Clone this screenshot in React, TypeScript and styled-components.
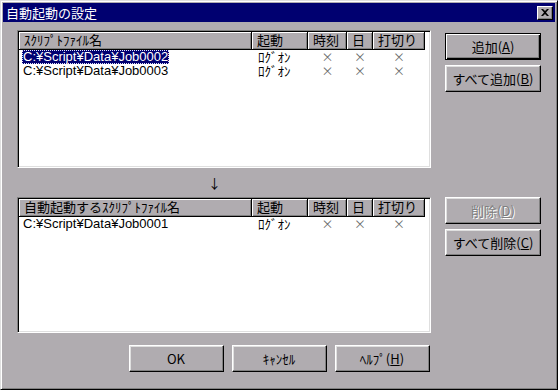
import React from "react";
import styled, { createGlobalStyle, css } from "styled-components";

const GRAY = "#b0acb0";
const NAVY = "#000070";
const FONT = `"Liberation Sans", "Noto Sans CJK JP", sans-serif`;
const JP = `"Noto Sans CJK JP", sans-serif`;

const GlobalStyle = createGlobalStyle`
  html, body { margin: 0; padding: 0; background: ${GRAY}; }
  body { font-family: ${FONT}; font-size: 13px; color: #000; }
  * { box-sizing: border-box; }
`;

const Dialog = styled.div`
  width: 558px;
  height: 390px;
  background: ${GRAY};
  border: 1px solid;
  border-color: #dfdfdf #000 #000 #dfdfdf;
  box-shadow: inset 1px 1px #fff, inset -1px -1px #808080;
  padding: 2px;
  display: flex;
  flex-direction: column;
`;

const TitleBar = styled.div`
  height: 19px;
  background: ${NAVY};
  display: flex;
  align-items: center;
  justify-content: space-between;
  padding: 0 2px 0 3px;
`;

const TitleText = styled.span`
  color: #fff;
  font-family: ${JP};
  font-size: 13px;
  line-height: 19px;
`;

const CloseButton = styled.div`
  width: 16px;
  height: 14px;
  background: ${GRAY};
  border: 1px solid;
  border-color: #fff #000 #000 #fff;
  box-shadow: inset -1px -1px #808080;
  display: flex;
  align-items: center;
  justify-content: center;
`;

const Body = styled.div`
  padding: 8px 11px 0 14px;
  display: flex;
  flex-direction: column;
`;

const Main = styled.div`
  display: grid;
  grid-template-columns: 414px 96px;
  grid-template-rows: 138px 29px 136px;
  column-gap: 14px;
`;

const ListBox = styled.div`
  background: #fff;
  border: 1px solid;
  border-color: #808080 #fff #fff #808080;
  box-shadow: inset 1px 1px #000, inset -1px -1px #dfdfdf;
  padding: 1px;
`;

const COLS = "233px 56px 39px 26px 52px";

const HeaderRow = styled.div`
  display: grid;
  grid-template-columns: ${COLS};
  height: 18px;
`;

const HeaderCell = styled.div`
  height: 18px;
  background: ${GRAY};
  border-right: 1px solid #000;
  border-bottom: 1px solid #000;
  box-shadow: inset 1px 1px #fff, inset -1px -1px #808080;
  padding-left: 5px;
  font-family: ${JP};
  font-size: 13px;
  line-height: 16px;
  white-space: nowrap;
`;

const Row = styled.div`
  display: grid;
  grid-template-columns: ${COLS};
  height: 14px;
  white-space: nowrap;
`;

const Cell = styled.div<{ $mark?: boolean; $pad?: number }>`
  height: 14px;
  line-height: 14px;
  font-family: ${FONT};
  font-size: 13px;
  padding-left: ${(p) => p.$pad ?? 3}px;
  ${(p) =>
    p.$mark &&
    css`
      text-align: center;
      padding-left: 0;
      color: #6c6c6c;
      font-family: ${JP};
      font-size: 12px;
    `}
`;

const NameLabel = styled.span<{ $selected?: boolean }>`
  display: inline-block;
  height: 14px;
  padding: 0 1px;
  ${(p) =>
    p.$selected &&
    css`
      background: ${NAVY};
      color: #fff;
      outline: 1px dotted #e0e0ff;
      outline-offset: -1px;
    `}
`;

const Kana = styled.span`
  font-family: ${JP};
  font-size: 13px;
  line-height: 14px;
`;

const ArrowRow = styled.div`
  display: flex;
  align-items: center;
  padding-left: 191px;
  font-family: ${JP};
  font-size: 13px;
`;

const ButtonGroup = styled.div<{ $offset: number }>`
  display: flex;
  flex-direction: column;
  gap: 5px;
  padding-top: ${(p) => p.$offset}px;
`;

const Button = styled.div<{ $default?: boolean; $disabled?: boolean; $w?: number }>`
  width: ${(p) => p.$w ?? 96}px;
  height: 27px;
  display: flex;
  align-items: center;
  justify-content: center;
  background: ${GRAY};
  font-family: ${JP};
  font-size: 13px;
  line-height: 16px;
  border: 1px solid;
  border-color: #fff #000 #000 #fff;
  box-shadow: inset -1px -1px #808080, inset 1px 1px #dfdfdf;
  ${(p) =>
    p.$default &&
    css`
      border-color: #000;
      box-shadow: inset 1px 1px #fff, inset -1px -1px #000, inset -2px -2px #808080;
    `}
  ${(p) =>
    p.$disabled &&
    css`
      color: #808080;
      text-shadow: 1px 1px #fff;
    `}
  u { text-decoration: underline; text-underline-offset: 1px; }
`;

const Footer = styled.div`
  display: flex;
  justify-content: center;
  gap: 8px;
  margin-top: 12px;
  padding-right: 3px;
`;

type Item = { name: string; selected?: boolean };

const Columns = ({ first }: { first: string }) => (
  <HeaderRow>
    <HeaderCell>{first}</HeaderCell>
    <HeaderCell>起動</HeaderCell>
    <HeaderCell>時刻</HeaderCell>
    <HeaderCell>日</HeaderCell>
    <HeaderCell>打切り</HeaderCell>
  </HeaderRow>
);

const List = ({ title, items }: { title: string; items: Item[] }) => (
  <ListBox>
    <Columns first={title} />
    {items.map((it) => (
      <Row key={it.name}>
        <Cell>
          <NameLabel $selected={it.selected}>{it.name}</NameLabel>
        </Cell>
        <Cell $pad={6}>
          <Kana>ﾛｸﾞｵﾝ</Kana>
        </Cell>
        <Cell $mark>×</Cell>
        <Cell $mark>×</Cell>
        <Cell $mark>×</Cell>
      </Row>
    ))}
  </ListBox>
);

export default function App() {
  return (
    <>
      <GlobalStyle />
      <Dialog>
        <TitleBar>
          <TitleText>自動起動の設定</TitleText>
          <CloseButton>
            <svg width="8" height="7" viewBox="0 0 8 7">
              <path d="M0 0h2l2 2 2-2h2L5 3.5 8 7H6L4 5 2 7H0l3-3.5z" fill="#000" />
            </svg>
          </CloseButton>
        </TitleBar>
        <Body>
          <Main>
            <List
              title="ｽｸﾘﾌﾟﾄﾌｧｲﾙ名"
              items={[
                { name: "C:¥Script¥Data¥Job0002", selected: true },
                { name: "C:¥Script¥Data¥Job0003" },
              ]}
            />
            <ButtonGroup $offset={3}>
              <Button $default>
                追加(<u>A</u>)
              </Button>
              <Button>
                すべて追加(<u>B</u>)
              </Button>
            </ButtonGroup>
            <ArrowRow>↓</ArrowRow>
            <div />
            <List title="自動起動するｽｸﾘﾌﾟﾄﾌｧｲﾙ名" items={[{ name: "C:¥Script¥Data¥Job0001" }]} />
            <ButtonGroup $offset={0}>
              <Button $disabled>
                削除(<u>D</u>)
              </Button>
              <Button>
                すべて削除(<u>C</u>)
              </Button>
            </ButtonGroup>
          </Main>
          <Footer>
            <Button $w={95}>OK</Button>
            <Button $w={95}>ｷｬﾝｾﾙ</Button>
            <Button $w={95}>
              ﾍﾙﾌﾟ(<u>H</u>)
            </Button>
          </Footer>
        </Body>
      </Dialog>
    </>
  );
}
